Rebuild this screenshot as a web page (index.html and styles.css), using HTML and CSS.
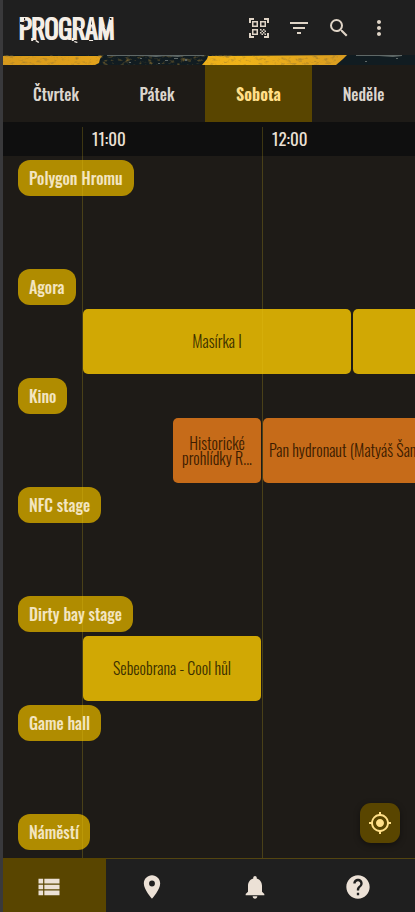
FILE: index.html
```html
<!DOCTYPE html>
<html lang="cs">
<head>
<meta charset="utf-8">
<meta name="viewport" content="width=device-width, initial-scale=1">
<title>Program</title>
<link rel="stylesheet" href="styles.css">
</head>
<body>
<div class="app">
  <header class="topbar">
    <h1 class="logo">PROGRAM
      <svg class="scratches" viewBox="0 0 94 34" preserveAspectRatio="none" aria-hidden="true">
        <path fill="#1f1f1f" d="M1 11h4v1l2 1-3 1-3-1zM5 7h1v2H5zM17 16l3-2v1l-2 2zM31 9h1v3h-1zM44 12l3 1-2 1zM58 17l3-2v2zM71 9l1 4-1 1zM84 15l2 3h-1zM89 7h2v2h-1z"/>
        <path fill="#f5eee6" d="M12 27h2v3h-2zM17 29l3 2-1 1-3-2zM52 27h2v3h-2zM55 30l3 1-1 1-3-1zM69 29h4v1h-4zM63 27h1v2h-1z"/>
      </svg>
    </h1>
    <div class="actions">
      <button class="icon-button" type="button" aria-label="Skenovat QR kód"><svg class="icon" viewBox="0 0 24 24"><path d="M9.5 6.5v3h-3v-3h3M11 5H5v6h6V5zm-1.500 9.500v3h-3v-3h3M11 13H5v6h6v-6zm6.500-6.500v3h-3v-3h3M19 5h-6v6h6V5zm-6 8h1.500v1.500H13V13zm1.500 1.500H16V16h-1.500v-1.500zM16 13h1.500v1.500H16V13zm-3 3h1.500v1.500H13V16zm1.500 1.500H16V19h-1.500v-1.500zM16 16h1.500v1.500H16V16zm1.500-1.500H19V16h-1.500v-1.500zm0 3H19V19h-1.500v-1.500zM22 7h-2V4h-3V2h5v5zm0 15v-5h-2v3h-3v2h5zM2 22h5v-2H4v-3H2v5zM2 2v5h2V4h3V2H2z"/></svg></button>
      <button class="icon-button" type="button" aria-label="Filtrovat"><svg class="icon" viewBox="0 0 24 24"><path d="M10 18h4v-2h-4v2zM3 6v2h18V6H3zm3 7h12v-2H6v2z"/></svg></button>
      <button class="icon-button" type="button" aria-label="Hledat"><svg class="icon" viewBox="0 0 24 24"><path d="M15.500 14h-.79l-.28-.27A6.470 6.470 0 0 0 16 9.500 6.500 6.500 0 1 0 9.500 16c1.610 0 3.090-.59 4.230-1.570l.27.28v.79l5 4.990L20.490 19l-4.990-5zm-6 0C7.010 14 5 11.990 5 9.500S7.010 5 9.500 5 14 7.010 14 9.500 11.990 14 9.500 14z"/></svg></button>
      <button class="icon-button" type="button" aria-label="Další"><svg class="icon" viewBox="0 0 24 24"><path d="M12 8c1.100 0 2-.9 2-2s-.9-2-2-2-2 .9-2 2 .9 2 2 2zm0 2c-1.100 0-2 .9-2 2s.9 2 2 2 2-.9 2-2-.9-2-2-2zm0 6c-1.100 0-2 .9-2 2s.9 2 2 2 2-.9 2-2-.9-2-2-2z"/></svg></button>
    </div>
  </header>
  <svg class="stripe" viewBox="0 0 412 10" preserveAspectRatio="none" aria-hidden="true">
    <defs>
      <linearGradient id="paint"><stop offset="0" stop-color="#d79a1c"/><stop offset=".35" stop-color="#e6a51b"/><stop offset=".7" stop-color="#f0b41a"/><stop offset="1" stop-color="#d99c20"/></linearGradient>
      <filter id="grit" x="0" y="0" width="1" height="1"><feTurbulence type="fractalNoise" baseFrequency=".18 .3" numOctaves="3" seed="8"/><feColorMatrix values="0 0 0 0 .3  0 0 0 0 .18  0 0 0 0 .03  2 0 0 0 -1.050"/></filter>
    </defs>
    <path fill="#111c21" d="M0 0h412v10H0z"/>
    <path fill="url(#paint)" d="M0 1h99l-2 3-1 4-4 2H0zM205 1l139-1-4 4-7 6H199l5-6z"/>
    <path filter="url(#grit)" d="M0 0h92v10H0zM205 0h130v10H205z"/>
    <path fill="#5f6867" d="M104 0h97v1h-20l-6 1-13-1-9 1-10-1h-39zM353 0h46v1l-9 1-14-1h-23zM162 5h3v1h-3zM171 3h4v1h-4zM155 8h2v1h-2zM182 4h2v2h-2zM126 7h2v1h-2zM137 3h2v1h-2zM362 6h2v1h-2zM393 3h2v1h-2z"/>
  </svg>
  <nav class="days" aria-label="Dny">
    <button class="day" type="button">Čtvrtek</button>
    <button class="day" type="button">Pátek</button>
    <button class="day active" type="button" aria-current="date">Sobota</button>
    <button class="day" type="button">Neděle</button>
  </nav>
  <main class="timetable">
    <div class="hours"><time>11:00</time><time>12:00</time></div>
    <section class="stage"><h2 class="chip">Polygon Hromu</h2><div class="track"></div></section>
    <section class="stage"><h2 class="chip">Agora</h2><div class="track">
      <a href="#" class="event from-1100 long"><span>Masírka I</span></a>
      <a href="#" class="event from-1230 long" aria-label="Další program"></a>
    </div></section>
    <section class="stage"><h2 class="chip">Kino</h2><div class="track">
      <a href="#" class="event film from-1130 short"><span>Historické prohlídky R...</span></a>
      <a href="#" class="event film from-1200 long wide-title"><span>Pan hydronaut (Matyáš Šanda)</span></a>
    </div></section>
    <section class="stage"><h2 class="chip">NFC stage</h2><div class="track"></div></section>
    <section class="stage"><h2 class="chip">Dirty bay stage</h2><div class="track">
      <a href="#" class="event from-1100"><span>Sebeobrana - Cool hůl</span></a>
    </div></section>
    <section class="stage"><h2 class="chip">Game hall</h2><div class="track"></div></section>
    <section class="stage"><h2 class="chip">Náměstí</h2><div class="track"></div></section>
    <div class="gridlines" aria-hidden="true"><i></i><i></i></div>
    <button class="locate" type="button" aria-label="Přejít na aktuální čas"><svg class="icon" viewBox="0 0 24 24"><path d="M12 8c-2.210 0-4 1.790-4 4s1.790 4 4 4 4-1.790 4-4-1.790-4-4-4zm8.940 3A8.994 8.994 0 0 0 13 3.060V1h-2v2.060A8.994 8.994 0 0 0 3.060 11H1v2h2.060A8.994 8.994 0 0 0 11 20.940V23h2v-2.060A8.994 8.994 0 0 0 20.940 13H23v-2h-2.060zM12 19c-3.870 0-7-3.130-7-7s3.130-7 7-7 7 3.130 7 7-3.130 7-7 7z"/></svg></button>
  </main>
  <nav class="bottom" aria-label="Hlavní navigace">
    <a href="#" class="tab active" aria-label="Program"><svg class="icon" viewBox="0 0 24 24"><path d="M3 14h4v-4H3v4zm0 5h4v-4H3v4zM3 9h4V5H3v4zm5 5h13v-4H8v4zm0 5h13v-4H8v4zM8 5v4h13V5H8z"/></svg></a>
    <a href="#" class="tab" aria-label="Mapa"><svg class="icon" viewBox="0 0 24 24"><path d="M12 2C8.130 2 5 5.130 5 9c0 5.250 7 13 7 13s7-7.750 7-13c0-3.870-3.130-7-7-7zm0 9.500a2.500 2.500 0 0 1 0-5 2.500 2.500 0 0 1 0 5z"/></svg></a>
    <a href="#" class="tab" aria-label="Oznámení"><svg class="icon" viewBox="0 0 24 24"><path d="M12 22c1.100 0 2-.9 2-2h-4c0 1.100.89 2 2 2zm6-6v-5c0-3.070-1.640-5.640-4.500-6.320V4c0-.83-.67-1.500-1.500-1.500s-1.500.67-1.500 1.500v.68C7.630 5.360 6 7.920 6 11v5l-2 2v1h16v-1l-2-2z"/></svg></a>
    <a href="#" class="tab" aria-label="Nápověda"><svg class="icon" viewBox="0 0 24 24"><path d="M12 2C6.480 2 2 6.480 2 12s4.480 10 10 10 10-4.480 10-10S17.520 2 12 2zm1 17h-2v-2h2v2zm2.070-7.750l-.9.920C13.450 12.900 13 13.500 13 15h-2v-.5c0-1.100.45-2.100 1.170-2.830l1.240-1.260c.37-.36.59-.86.59-1.410 0-1.100-.9-2-2-2s-2 .9-2 2H8c0-2.210 1.790-4 4-4s4 1.790 4 4c0 .88-.36 1.680-.93 2.250z"/></svg></a>
  </nav>
</div>
</body>
</html>
```

FILE: styles.css
```css
* { box-sizing: border-box; }

body {
  margin: 0;
  background: #1e1b17;
  color: #ece1d6;
  font-family: Oswald, "Liberation Sans Narrow", "Roboto Condensed", "Liberation Sans", sans-serif;
  font-size: 16px;
  line-height: 24px;
}

button {
  border: 0;
  padding: 0;
  background: none;
  color: inherit;
  font: inherit;
  cursor: pointer;
}

a { color: inherit; text-decoration: none; }

.icon { display: block; width: 24px; height: 24px; fill: currentColor; }

.app {
  display: flex;
  flex-direction: column;
  height: 100vh;
  border-left: 3px solid #39393b;
  overflow: hidden;
}

.topbar {
  flex: none;
  display: flex;
  align-items: center;
  justify-content: space-between;
  height: 55px;
  padding: 0 16px;
  background: #1f1f1f;
}

.logo {
  position: relative;
  margin: 0;
  color: #f5eee6;
  font-size: 26px;
  line-height: 34px;
  font-weight: 300;
  -webkit-text-stroke: 2px #f5eee6;
}

.scratches {
  position: absolute;
  inset: 0;
  width: 100%;
  height: 100%;
}

.actions { display: flex; color: #dfd4c6; }

.icon-button {
  display: grid;
  place-items: center;
  width: 40px;
  height: 40px;
}

.stripe { flex: none; display: block; width: 100%; height: 10px; }

.days {
  flex: none;
  display: grid;
  grid-template-columns: 106fr 96fr 107fr 103fr;
  height: 57px;
  color: #dcd6ce;
}

.day { font-weight: 500; }

.day.active { background: #594500; color: #ffdf88; font-weight: 700; }

.timetable {
  position: relative;
  flex: 1;
  min-height: 0;
  overflow: hidden;
}

.hours {
  display: grid;
  grid-template-columns: 180px 180px;
  align-items: center;
  height: 34px;
  padding-left: 89px;
  background: #0f0f0f;
  font-size: 17px;
}

.stage { padding-top: 4px; }

.chip {
  width: fit-content;
  margin: 0 0 4px 15px;
  padding: 6px 11px;
  border-radius: 12px;
  background: #b08c00;
  color: #f3e5c0;
  font-size: 16px;
  line-height: 24px;
  font-weight: 500;
}

/* One column is a quarter of an hour; the first starts at 11:00. */
.track {
  display: grid;
  grid-template-columns: repeat(12, 45px);
  grid-template-rows: 65px;
  height: 65px;
  padding-left: 80px;
}

.event {
  display: flex;
  align-items: center;
  justify-content: center;
  grid-row: 1;
  grid-column-end: span 4;
  margin-right: 2px;
  padding: 0 6px;
  border-radius: 5px;
  background: #d1a804;
  color: #3b2f00;
  font-weight: 300;
  line-height: 15px;
  text-align: center;
}

.event.film { background: #c66b19; color: #3c1c00; }
.event.short { grid-column-end: span 2; }
.event.long { grid-column-end: span 6; }
.event.wide-title { justify-content: flex-start; white-space: nowrap; }

.from-1100 { grid-column-start: 1; }
.from-1130 { grid-column-start: 3; }
.from-1200 { grid-column-start: 5; }
.from-1230 { grid-column-start: 7; }

.gridlines {
  position: absolute;
  inset: 5px 0 0 79px;
  display: grid;
  grid-template-columns: 180px 180px;
  pointer-events: none;
}

.gridlines i { border-left: 1px solid rgba(226, 194, 30, .22); }

.locate {
  position: absolute;
  right: 15px;
  bottom: 15px;
  display: grid;
  place-items: center;
  width: 40px;
  height: 40px;
  border-radius: 11px;
  background: #594500;
  color: #ffdf88;
  box-shadow: 0 2px 6px rgba(0, 0, 0, .4);
}

.bottom {
  flex: none;
  display: grid;
  grid-template-columns: repeat(4, 1fr);
  height: 54px;
  background: #1f1f1f;
}

.tab {
  display: grid;
  place-items: center;
  padding: 3px 12px 0 0;
  border-top: 1px solid #544510;
}

.tab.active { border-color: #594500; background: #594500; }
.tab .icon { width: 28px; height: 28px; }
```
